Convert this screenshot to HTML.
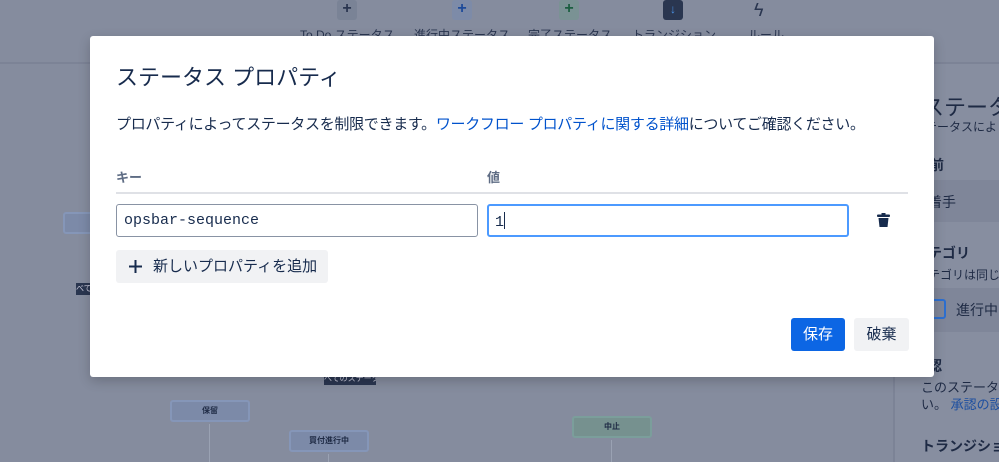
<!DOCTYPE html>
<html><head><meta charset="utf-8"><style>
*{box-sizing:border-box;margin:0;padding:0}
body{width:999px;height:462px;overflow:hidden;position:relative;background:#858c9e;font-family:"Liberation Sans","Noto Sans CJK JP",sans-serif;color:#172b4d}
.abs{position:absolute}
.top{left:0;top:0;width:999px;height:64px;background:#858c9e;border-bottom:2px solid #7c8396}
.tb{width:20px;height:20px;border-radius:3px;top:0;text-align:center;font-size:16px;line-height:18px;font-weight:bold}
.tl{top:26px;font-size:12px;color:#2a3650}
.right{left:893px;top:64px;width:106px;height:398px;background:#878ea0;border-left:2px solid #7c8396}
.rt{font-size:14px;color:#1e2a44;white-space:nowrap}
.node{border:2px solid #8596b8;background:#7c8aa8;border-radius:3px;font-size:8px;font-weight:bold;text-align:center;color:#1e2a44}
.modal{left:90px;top:36px;width:844px;height:341px;background:#fff;border-radius:3px;box-shadow:0 4px 12px rgba(0,0,0,.2)}
.in{height:33px;border:1px solid #8993a4;border-radius:3px;font-family:"Liberation Mono","DejaVu Sans Mono",monospace;font-size:15px;padding:7px 7px;color:#172b4d}
</style></head><body>
<div class="abs top"></div>
<div class="abs tb" style="left:337px;background:#7a8396;color:#2a3650">+</div>
<div class="abs tb" style="left:452px;background:#7d8ba8;color:#1d4a9a">+</div>
<div class="abs tb" style="left:559px;background:#7a9294;color:#1b5e40">+</div>
<div class="abs tb" style="left:663px;background:#2a3650;color:#4a90e2;font-size:12px">↓</div>
<div class="abs" style="left:754px;top:0;font-size:18px;color:#2a3650">ϟ</div>
<div class="abs tl" style="left:300px">To Do ステータス</div>
<div class="abs tl" style="left:414px">進行中ステータス</div>
<div class="abs tl" style="left:528px">完了ステータス</div>
<div class="abs tl" style="left:632px">トランジション</div>
<div class="abs tl" style="left:748px">ルール</div>
<div class="abs right"></div>
<div class="abs rt" style="left:922px;top:90px;font-size:22px">ステータ</div>
<div class="abs rt" style="left:925px;top:118px;font-size:12px">テータスによ</div>
<div class="abs rt" style="left:930px;top:155px;font-weight:bold">前</div>
<div class="abs" style="left:895px;top:180px;width:104px;height:42px;background:#7f8699"></div>
<div class="abs rt" style="left:928px;top:192px">着手</div>
<div class="abs rt" style="left:928px;top:243px;font-weight:bold">テゴリ</div>
<div class="abs rt" style="left:928px;top:266px;font-size:12px">テゴリは同じ</div>
<div class="abs" style="left:895px;top:288px;width:104px;height:44px;background:#7f8699"></div>
<div class="abs" style="left:930px;top:299px;width:16px;height:20px;border:2px solid #2d6fd0;border-radius:3px"></div>
<div class="abs rt" style="left:956px;top:300px">進行中</div>
<div class="abs rt" style="left:928px;top:356px;font-weight:bold">認</div>
<div class="abs rt" style="left:921px;top:377px;font-size:13px">このステータス</div>
<div class="abs rt" style="left:921px;top:394px;font-size:13px">い。 <span style="color:#1d4fa0">承認の設定</span></div>
<div class="abs rt" style="left:921px;top:436px;font-weight:bold">トランジション</div>
<div class="abs node" style="left:63px;top:212px;width:30px;height:22px"></div>
<div class="abs" style="left:76px;top:283px;width:16px;height:12px;background:#2a3650;font-size:8px;color:#ccd;overflow:hidden;white-space:nowrap">べて</div>
<div class="abs" style="left:324px;top:373px;width:52px;height:12px;background:#2a3650;font-size:8px;color:#ccd;text-align:center;overflow:hidden;white-space:nowrap">べてのステータ</div>
<div class="abs node" style="left:170px;top:400px;width:80px;height:22px;line-height:18px">保留</div>
<div class="abs" style="left:209px;top:424px;width:1px;height:38px;background:#9aa2b3"></div>
<div class="abs node" style="left:289px;top:430px;width:80px;height:22px;line-height:18px">買付進行中</div>
<div class="abs" style="left:328px;top:454px;width:1px;height:8px;background:#9aa2b3"></div>
<div class="abs node" style="left:572px;top:416px;width:80px;height:22px;line-height:18px;background:#76918f;border-color:#7b9e9b">中止</div>
<div class="abs" style="left:611px;top:440px;width:1px;height:22px;background:#9aa2b3"></div>
<div class="abs modal"></div>
<div class="abs" style="left:116px;top:60px;font-size:22px;color:#172b4d">ステータス プロパティ</div>
<div class="abs" style="left:116px;top:113px;font-size:15px;letter-spacing:-0.3px;color:#172b4d;white-space:nowrap">プロパティによってステータスを制限できます。<span style="color:#0052cc">ワークフロー プロパティに関する詳細</span>についてご確認ください。</div>
<div class="abs" style="left:116px;top:167px;font-size:13px;font-weight:bold;color:#5e6c84">キー</div>
<div class="abs" style="left:487px;top:167px;font-size:13px;font-weight:bold;color:#5e6c84">値</div>
<div class="abs" style="left:116px;top:192px;width:792px;height:2px;background:#dfe1e6"></div>
<div class="abs in" style="left:116px;top:204px;width:362px">opsbar-sequence</div>
<div class="abs in" style="left:487px;top:204px;width:362px;border:2px solid #4c9aff;padding:6px 6px">1<span style="display:inline-block;width:1px;height:17px;background:#172b4d;vertical-align:-3px"></span></div>
<svg class="abs" style="left:877px;top:213px" width="13" height="14" viewBox="0 0 13 14"><rect x="0" y="1.5" width="13" height="2.5" rx="1" fill="#172b4d"/><rect x="4.5" y="0" width="4" height="2" fill="#172b4d"/><path d="M1.5 5h10l-1 9h-8z" fill="#172b4d"/></svg>
<div class="abs" style="left:116px;top:250px;width:212px;height:33px;background:#f1f2f4;border-radius:3px"></div>
<svg class="abs" style="left:129px;top:260px" width="13" height="13" viewBox="0 0 13 13"><path d="M6.5 0v13M0 6.5h13" stroke="#172b4d" stroke-width="2"/></svg>
<div class="abs" style="left:153px;top:250px;font-size:15px;line-height:33px">新しいプロパティを追加</div>
<div class="abs" style="left:791px;top:318px;width:54px;height:33px;background:#0c66e4;border-radius:3px;color:#fff;font-size:15px;line-height:33px;text-align:center">保存</div>
<div class="abs" style="left:854px;top:318px;width:55px;height:33px;background:#f1f2f4;border-radius:3px;color:#172b4d;font-size:15px;line-height:33px;text-align:center">破棄</div>
</body></html>
